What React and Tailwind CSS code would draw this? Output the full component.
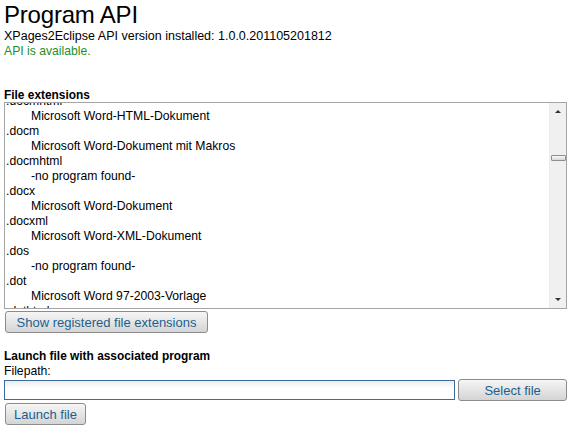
import { useState } from "react";

const extensions = [
  { ext: ".docmhtml", desc: "Microsoft Word-HTML-Dokument" },
  { ext: ".docm", desc: "Microsoft Word-Dokument mit Makros" },
  { ext: ".docmhtml", desc: "-no program found-" },
  { ext: ".docx", desc: "Microsoft Word-Dokument" },
  { ext: ".docxml", desc: "Microsoft Word-XML-Dokument" },
  { ext: ".dos", desc: "-no program found-" },
  { ext: ".dot", desc: "Microsoft Word 97-2003-Vorlage" },
  { ext: ".dothtml", desc: "Microsoft Word-HTML-Vorlage" },
];

function OldButton({ children, className = "" }) {
  return (
    <button
      className={
        "h-[22px] rounded-[3px] border border-[#8c8c8c] bg-gradient-to-b from-[#f6f6f6] to-[#d4d4d4] text-[13px] text-[#1c5f8e] leading-none " +
        className
      }
    >
      {children}
    </button>
  );
}

function ScrollBar() {
  return (
    <div className="flex w-[17px] flex-col items-center border-l border-[#ececec] bg-[#f0f0f0]">
      <div className="flex h-[17px] w-full items-center justify-center">
        <div className="h-0 w-0 border-x-[3px] border-b-[3px] border-x-transparent border-b-[#333]" />
      </div>
      <div className="mt-[35px] h-[6px] w-[15px] rounded-[1px] border border-[#8e8e8e] bg-gradient-to-b from-[#fafafa] to-[#d6d6d6]" />
      <div className="flex-1" />
      <div className="flex h-[17px] w-full items-center justify-center">
        <div className="h-0 w-0 border-x-[3px] border-t-[3px] border-x-transparent border-t-[#333]" />
      </div>
    </div>
  );
}

export default function App() {
  const [path, setPath] = useState("");

  return (
    <div className="min-h-[430px] bg-white px-[4px] text-[12.2px] leading-[15px] text-black [font-family:'Liberation_Sans',Arial,sans-serif]">
      <h1 className="pt-[1px] text-[24px] leading-[27px] tracking-[-0.2px]">Program API</h1>
      <p className="mt-[1px] text-[12.5px]">XPages2Eclipse API version installed: 1.0.0.201105201812</p>
      <p className="text-[#1f8f1f]">API is available.</p>

      <h2 className="mt-[29px] text-[11.9px] font-bold">File extensions</h2>
      <div className="-mt-[1px] flex h-[207px] border border-[#a5a5a5]">
        <div className="flex-1 overflow-hidden">
          <div className="-mt-[9px]">
            {extensions.map((item, i) => (
              <div key={i}>
                <div className="pl-[1px]">{item.ext}</div>
                <div className="pl-[26px]">{item.desc}</div>
              </div>
            ))}
          </div>
        </div>
        <ScrollBar />
      </div>
      <OldButton className="mt-[2px] ml-[1px] w-[203px]">Show registered file extensions</OldButton>

      <h2 className="mt-[16px] text-[11.9px] font-bold">Launch file with associated program</h2>
      <p>Filepath:</p>
      <div className="flex items-center gap-[3px]">
        <input
          value={path}
          onChange={(e) => setPath(e.target.value)}
          className="h-[20px] w-[452px] border border-[#3d6b9b] bg-gradient-to-b from-[#ececec] to-white to-40% outline-none"
        />
        <OldButton className="w-[109px]">Select file</OldButton>
      </div>
      <OldButton className="mt-[2px] ml-[1px] w-[81px]">Launch file</OldButton>
    </div>
  );
}
